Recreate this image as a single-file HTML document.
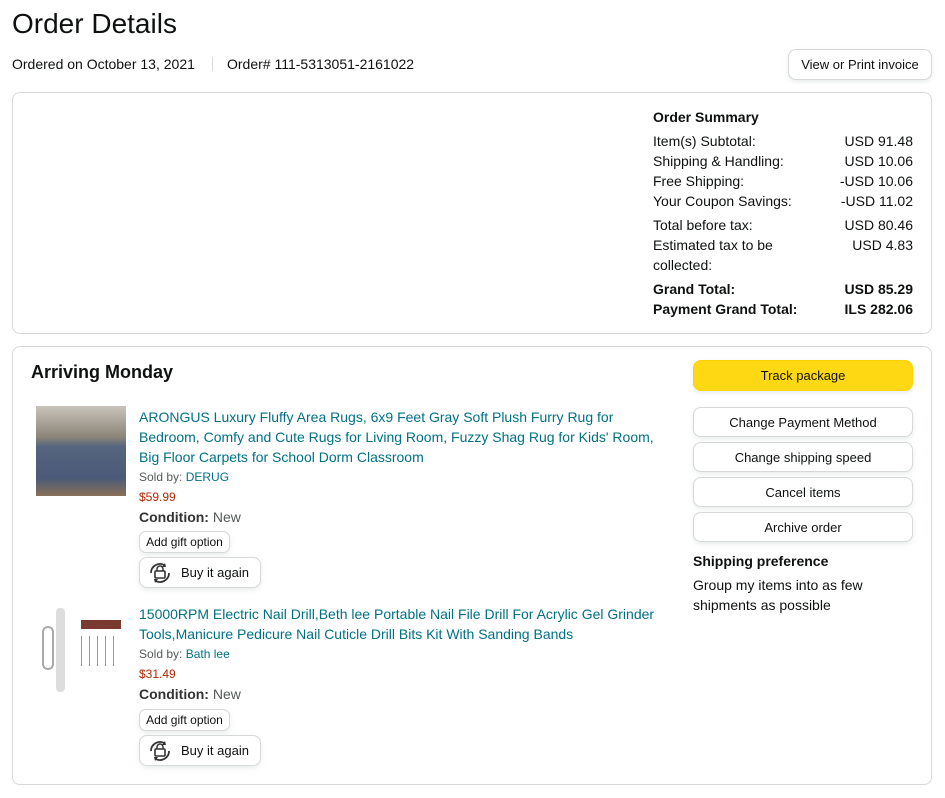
<!DOCTYPE html><html><head><meta charset="utf-8"><style>
body{margin:0;width:945px;height:798px;background:#fff;font-family:"Liberation Sans",Arial,sans-serif;color:#0f1111;position:relative;overflow:hidden}
.a{position:absolute;white-space:nowrap}
.box{position:absolute;border:1px solid #d5d9d9;border-radius:8px;box-sizing:border-box}
.btn{position:absolute;border:1px solid #d5d9d9;border-radius:8px;box-sizing:border-box;font-size:13px;text-align:center;box-shadow:0 2px 5px rgba(213,217,217,.5);background:#fff}
.s{font-size:14px;line-height:20px}
.l{position:absolute;left:653px;width:260px;font-size:14px;line-height:20px}
.l span{float:right}
.t{color:#007185;font-size:14px;line-height:20px;position:absolute;left:139px;width:530px}
.sm{font-size:12px}
</style></head><body>
<div class="a" style="left:12px;top:8px;font-size:28px">Order Details</div>
<div class="a s" style="left:12px;top:54px">Ordered on October 13, 2021</div>
<div class="a" style="left:212px;top:57px;width:1px;height:14px;background:#d5d9d9"></div>
<div class="a s" style="left:227px;top:54px">Order# 111-5313051-2161022</div>
<div class="btn" style="left:788px;top:49px;width:144px;height:31px;line-height:29px">View or Print invoice</div>
<div class="box" style="left:12px;top:92px;width:920px;height:242px"></div>
<div class="l" style="top:107px;font-weight:bold">Order Summary</div>
<div class="l" style="top:131px">Item(s) Subtotal:<span>USD 91.48</span></div>
<div class="l" style="top:151px">Shipping &amp; Handling:<span>USD 10.06</span></div>
<div class="l" style="top:171px">Free Shipping:<span>-USD 10.06</span></div>
<div class="l" style="top:191px">Your Coupon Savings:<span>-USD 11.02</span></div>
<div class="l" style="top:215px">Total before tax:<span>USD 80.46</span></div>
<div class="l" style="top:235px">Estimated tax to be<span>USD 4.83</span><br>collected:</div>
<div class="l" style="top:279px;font-weight:bold">Grand Total:<span>USD 85.29</span></div>
<div class="l" style="top:299px;font-weight:bold">Payment Grand Total:<span>ILS 282.06</span></div>
<div class="box" style="left:12px;top:346px;width:920px;height:439px"></div>
<div class="a" style="left:31px;top:362px;font-size:18px;font-weight:bold">Arriving Monday</div>
<div class="btn" style="left:693px;top:360px;width:220px;height:31px;line-height:30px;background:#ffd814;border-color:#fcd200">Track package</div>
<div class="btn" style="left:693px;top:407px;width:220px;height:30px;line-height:29px">Change Payment Method</div>
<div class="btn" style="left:693px;top:442px;width:220px;height:30px;line-height:29px">Change shipping speed</div>
<div class="btn" style="left:693px;top:477px;width:220px;height:30px;line-height:29px">Cancel items</div>
<div class="btn" style="left:693px;top:512px;width:220px;height:30px;line-height:29px">Archive order</div>
<div class="a s" style="left:693px;top:551px;font-weight:bold">Shipping preference</div>
<div class="a s" style="left:693px;top:575px">Group my items into as few<br>shipments as possible</div>

<div class="a" style="left:36px;top:406px;width:90px;height:90px;background:linear-gradient(#c9c4bb 0,#8a8378 35%,#55657f 45%,#4a5a78 80%,#8a7058 100%)"></div>
<div class="t" style="top:407px">ARONGUS Luxury Fluffy Area Rugs, 6x9 Feet Gray Soft Plush Furry Rug for Bedroom, Comfy and Cute Rugs for Living Room, Fuzzy Shag Rug for Kids' Room, Big Floor Carpets for School Dorm Classroom</div>
<div class="a sm" style="left:139px;top:470px;color:#565959">Sold by: <span style="color:#007185">DERUG</span></div>
<div class="a sm" style="left:139px;top:490px;color:#b12704">$59.99</div>
<div class="a s" style="left:139px;top:507px;color:#565959"><b style="color:#333">Condition:</b> New</div>
<div class="btn" style="left:139px;top:531px;width:91px;height:22px;line-height:21px;font-size:12px;border-radius:7px">Add gift option</div>
<div class="btn" style="left:139px;top:557px;width:122px;height:31px;line-height:30px;font-size:13px;text-align:left;padding-left:41px">Buy it again</div>
<svg class="a" style="left:146px;top:561px" width="28" height="24" viewBox="0 0 28 24"><path d="M5 12a9 9 0 0 1 14-7.5M23 12a9 9 0 0 1-14 7.5" fill="none" stroke="#333" stroke-width="1.8"/><path d="M19 2l1 4-4 0z M9 22l-1-4 4 0z" fill="#333"/><rect x="9" y="10" width="10" height="7" rx="1" fill="none" stroke="#333" stroke-width="1.6"/><path d="M11 10V8a3 3 0 0 1 6 0v2" fill="none" stroke="#333" stroke-width="1.5"/></svg>

<div class="a" style="left:36px;top:606px;width:90px;height:90px">
<div class="a" style="left:20px;top:2px;width:9px;height:84px;background:#ddd;border-radius:4px"></div>
<div class="a" style="left:6px;top:20px;width:8px;height:40px;border:2px solid #aaa;border-radius:6px"></div>
<div class="a" style="left:45px;top:14px;width:40px;height:9px;background:#7a3a30"></div>
<div class="a" style="left:45px;top:30px;width:40px;height:30px;background:repeating-linear-gradient(90deg,#999 0 1px,transparent 1px 8px)"></div>
</div>
<div class="t" style="top:604px">15000RPM Electric Nail Drill,Beth lee Portable Nail File Drill For Acrylic Gel Grinder Tools,Manicure Pedicure Nail Cuticle Drill Bits Kit With Sanding Bands</div>
<div class="a sm" style="left:139px;top:647px;color:#565959">Sold by: <span style="color:#007185">Bath lee</span></div>
<div class="a sm" style="left:139px;top:667px;color:#b12704">$31.49</div>
<div class="a s" style="left:139px;top:684px;color:#565959"><b style="color:#333">Condition:</b> New</div>
<div class="btn" style="left:139px;top:709px;width:91px;height:22px;line-height:21px;font-size:12px;border-radius:7px">Add gift option</div>
<div class="btn" style="left:139px;top:735px;width:122px;height:31px;line-height:30px;font-size:13px;text-align:left;padding-left:41px">Buy it again</div>
<svg class="a" style="left:146px;top:739px" width="28" height="24" viewBox="0 0 28 24"><path d="M5 12a9 9 0 0 1 14-7.5M23 12a9 9 0 0 1-14 7.5" fill="none" stroke="#333" stroke-width="1.8"/><path d="M19 2l1 4-4 0z M9 22l-1-4 4 0z" fill="#333"/><rect x="9" y="10" width="10" height="7" rx="1" fill="none" stroke="#333" stroke-width="1.6"/><path d="M11 10V8a3 3 0 0 1 6 0v2" fill="none" stroke="#333" stroke-width="1.5"/></svg>
</body></html>
